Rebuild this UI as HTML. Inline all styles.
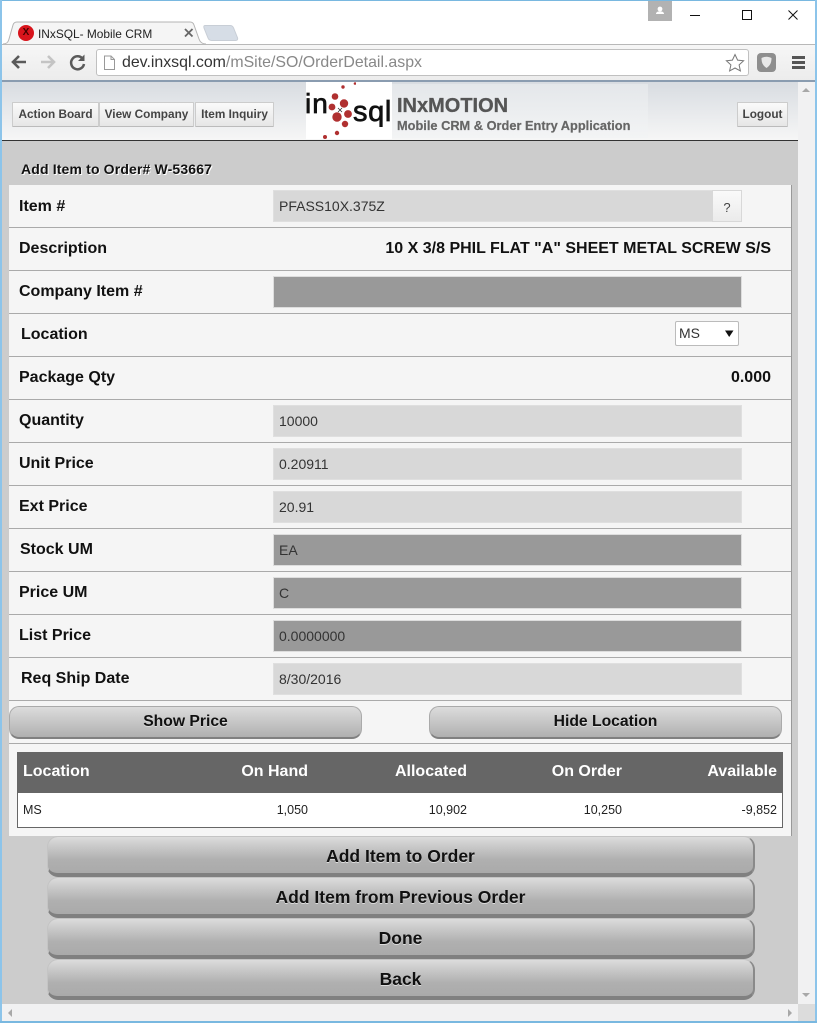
<!DOCTYPE html>
<html><head><meta charset="utf-8"><title>INxSQL- Mobile CRM</title>
<style>
html,body{margin:0;padding:0;width:817px;height:1023px;overflow:hidden;background:#fff;font-family:"Liberation Sans",sans-serif;color:#000}
.a{position:absolute}
.t{position:absolute;white-space:nowrap}
.lb{position:absolute;white-space:nowrap;font-weight:bold;font-size:16px;line-height:20px;color:#111;margin-top:1px}
.ln{position:absolute;left:9px;width:782px;height:1px;background:#aaa}
.in{position:absolute;left:273px;width:469px;height:32px;background:#d8d8d8;border:1px solid #dfdfdf;box-sizing:border-box;font-size:14px;line-height:31px;padding-left:5px;color:#333}
.dk{background:#999;border-color:#ddd}
.hb{position:absolute;top:102px;height:25px;box-sizing:border-box;border:1px solid #ccc;border-bottom-color:#bbb;background:linear-gradient(#fafafa,#e6e6e6);font-size:11.8px;font-weight:bold;line-height:22px;text-align:center;color:#444;border-radius:1px}
.b1{position:absolute;top:706px;height:33px;width:353px;box-sizing:border-box;border-radius:10px;background:linear-gradient(#dcdcdc,#b0b0b0);border:1px solid #aaa;border-bottom:2px solid #808080;font-weight:bold;font-size:15.7px;line-height:30px;text-align:center;color:#111;text-shadow:0 1px 0 #ddd}
.b2{position:absolute;left:47px;width:708px;height:41px;box-sizing:border-box;border-radius:11px;background:linear-gradient(#dcdcdc 0%,#b0b0b0 62%,#aaa 100%);border:1px solid #c4c4c4;border-right:2px solid #8a8a8a;border-bottom:4px solid #808080;font-weight:bold;font-size:17.5px;line-height:39px;text-align:center;color:#111;text-shadow:0 1px 0 #ddd}
.th{position:absolute;top:762px;font-weight:bold;font-size:16px;line-height:20px;color:#fff;white-space:nowrap}
.td{position:absolute;top:802px;font-size:12.5px;line-height:16px;color:#222;white-space:nowrap}
</style></head><body>

<!-- window frame -->
<div class="a" style="left:0;top:0;width:817px;height:1px;background:#79b8e0"></div>
<div class="a" style="left:0;top:0;width:2px;height:1023px;background:#8cc4ea"></div>
<div class="a" style="right:0;top:0;width:2px;height:1023px;background:#8cc4ea"></div>
<div class="a" style="left:0;bottom:0;width:817px;height:2px;background:#79b8e0"></div>

<!-- title controls -->
<div class="a" style="left:648px;top:1px;width:24px;height:20px;background:#b2b2b2"></div>
<svg class="a" style="left:648px;top:1px" width="24" height="20"><circle cx="12" cy="8" r="2.4" fill="#fff"/><path d="M8 13c0-2 2-2.6 4-2.6s4 .6 4 2.6z" fill="#fff"/></svg>
<svg class="a" style="left:690px;top:5px" width="120" height="20" fill="none" stroke="#111" stroke-width="1"><path d="M0 10.5h10"/><rect x="52.5" y="5.500" width="9" height="9"/><path d="M98.500 5.500l9 9M107.500 5.500l-9 9"/></svg>

<!-- tab strip -->
<div class="a" style="left:2px;top:44px;width:813px;height:1px;background:#b8b8b8"></div>
<svg class="a" style="left:2px;top:20px" width="240" height="26">
<path d="M1 24c3 0 5-1 6-5l4-14c.6-2 2-3 4-3h173c2 0 3.400 1 4 3l5 14c1 3 3 5 7 5" fill="#f5f5f5" stroke="#b4b4b4"/>
<path d="M203 5.500h25c2 0 3 1 3.600 2.500l4 10c.4 1.500-.4 2.500-2 2.500h-24c-2 0-3-1-3.600-2.500l-4-10c-.4-1.500-.2-2.500 1-2.500z" fill="#d6dde6" stroke="#c8ced6"/>
</svg>
<div class="a" style="left:18px;top:25px;width:16px;height:16px;border-radius:50%;background:#d8141c"></div>
<div class="t" style="left:18px;top:25px;width:16px;text-align:center;font-size:10px;line-height:16px;font-weight:bold;color:#400">X</div>
<div class="t" style="left:38px;top:27px;font-size:11.9px;line-height:14px;color:#222">INxSQL- Mobile CRM</div>
<svg class="a" style="left:183px;top:27px" width="12" height="12"><path d="M2 2l7.500 7.500M9.500 2L2 9.500" stroke="#666" stroke-width="1.800"/></svg>

<!-- toolbar -->
<div class="a" style="left:2px;top:45px;width:813px;height:36px;background:linear-gradient(#f6f6f6,#ececec)"></div>
<div class="a" style="left:2px;top:80px;width:813px;height:2px;background:#8a9cb0"></div>
<svg class="a" style="left:10px;top:52px" width="80" height="20" fill="none">
<path d="M16 10H3M9 4l-6 6 6 6" stroke="#5a5a5a" stroke-width="2.600"/>
<path d="M31 10h13M38 4l6 6-6 6" stroke="#c4c4c4" stroke-width="2.600"/>
<path d="M72.500 6.500A6.500 6.500 0 1 0 74 12" stroke="#5a5a5a" stroke-width="2.500"/>
<path d="M74.500 2.500v6.500h-6.500z" fill="#5a5a5a"/>
</svg>
<div class="a" style="left:96px;top:49px;width:653px;height:27px;box-sizing:border-box;background:#fff;border:1px solid #c0c0c0;border-radius:3px"></div>
<svg class="a" style="left:103px;top:55px" width="13" height="16"><path d="M1.500 1h6.500l3.500 3.500V14.500h-10zM8 1v3.500h3.500" fill="#fff" stroke="#999"/></svg>
<div class="t" style="left:122px;top:53px;font-size:15.9px;line-height:19px;color:#888"><span style="color:#333">dev.inxsql.com</span>/mSite/SO/OrderDetail.aspx</div>
<svg class="a" style="left:724px;top:52px" width="22" height="22"><path d="M11 2.500l2.600 5.600 6 .7-4.500 4.100 1.300 6L11 16l-5.400 2.900 1.300-6-4.500-4.100 6-.7z" fill="#fff" stroke="#777"/></svg>
<div class="a" style="left:757px;top:53px;width:19px;height:19px;border-radius:4px;background:#8e8e8e"></div>
<svg class="a" style="left:757px;top:53px" width="19" height="19"><path d="M4.500 5c3.300-1.700 6.700-1.700 10 0 0 4.500-1.200 7.500-5 10-3.800-2.500-5-5.500-5-10z" fill="#e8e8e8"/></svg>
<div class="a" style="left:792px;top:56px;width:13px;height:3px;background:#555;box-shadow:0 5px 0 #555,0 10px 0 #555"></div>

<!-- page header -->
<div class="a" style="left:2px;top:82px;width:796px;height:58px;background:linear-gradient(#d8dce1,#f6f6f6)"></div>
<div class="a" style="left:2px;top:140px;width:796px;height:1px;background:#333"></div>
<div class="hb" style="left:12px;width:87px">Action Board</div>
<div class="hb" style="left:99px;width:95px">View Company</div>
<div class="hb" style="left:195px;width:79px">Item Inquiry</div>
<div class="hb" style="left:737px;width:51px">Logout</div>

<!-- logo -->
<div class="a" style="left:392px;top:84px;width:256px;height:54px;background:linear-gradient(#e4e7ea,#f3f4f5)"></div>
<div class="a" style="left:306px;top:82px;width:86px;height:57px;background:#fff"></div>
<div class="t" style="left:305px;top:89px;font-size:28px;line-height:30px;color:#111;-webkit-text-stroke:.7px #111;letter-spacing:1px">in</div>
<div class="t" style="left:353px;top:97px;font-size:29px;line-height:30px;color:#111;-webkit-text-stroke:.7px #111;letter-spacing:.6px;width:39px;overflow:hidden">sql</div>
<svg class="a" style="left:306px;top:82px" width="50" height="57" fill="#b03030">
<circle cx="37" cy="5" r="1.700"/><circle cx="49" cy="1.500" r="1.300"/><circle cx="29" cy="14.500" r="3.300"/><circle cx="38" cy="21.500" r="4.200"/><circle cx="26" cy="25" r="3.400"/><circle cx="42" cy="32" r="3.900"/><circle cx="31" cy="35" r="4.700"/><circle cx="39" cy="42" r="3.200"/><circle cx="31" cy="51" r="2.200"/><circle cx="19" cy="55" r="2"/>
<path d="M32 26l4 4M36 26l-4 4" stroke="#222" stroke-width=".7" fill="none"/></svg>
<div class="t" style="left:397px;top:94px;font-size:20px;line-height:24px;font-weight:bold;color:#555;-webkit-text-stroke:.3px #555">INxMOTION</div>
<div class="t" style="left:397px;top:118px;font-size:12.8px;line-height:16px;font-weight:bold;color:#666;-webkit-text-stroke:.2px #666">Mobile CRM &amp; Order Entry Application</div>

<!-- content bg -->
<div class="a" style="left:2px;top:141px;width:796px;height:863px;background:#ccc"></div>
<div class="t" style="left:21px;top:161px;font-size:14px;line-height:17px;font-weight:bold;color:#111;text-shadow:1px 1px 0 #fff;letter-spacing:.15px">Add Item to Order# W-53667</div>

<!-- panel -->
<div class="a" style="left:9px;top:185px;width:783px;height:651px;box-sizing:border-box;background:#f5f5f5;border-right:1px solid #999"></div>
<div class="ln" style="top:227px"></div><div class="ln" style="top:270px"></div><div class="ln" style="top:313px"></div><div class="ln" style="top:356px"></div><div class="ln" style="top:399px"></div><div class="ln" style="top:442px"></div><div class="ln" style="top:485px"></div><div class="ln" style="top:528px"></div><div class="ln" style="top:571px"></div><div class="ln" style="top:614px"></div><div class="ln" style="top:657px"></div><div class="ln" style="top:700px"></div><div class="ln" style="top:743px"></div>

<div class="lb" style="left:19px;top:196px">Item #</div>
<div class="in" style="top:190px">PFASS10X.375Z</div>
<div class="a" style="left:712px;top:190px;width:30px;height:32px;box-sizing:border-box;background:linear-gradient(#fafafa,#ebebeb);border:1px solid #d8d8d8;font-size:13px;line-height:33px;text-align:center;color:#444">?</div>

<div class="lb" style="left:19px;top:238px">Description</div>
<div class="lb" style="right:46px;top:238px">10 X 3/8 PHIL FLAT "A" SHEET METAL SCREW S/S</div>

<div class="lb" style="left:19px;top:281px">Company Item #</div>
<div class="in dk" style="top:276px"></div>

<div class="lb" style="left:21px;top:324px">Location</div>
<div class="a" style="left:675px;top:321px;width:64px;height:25px;box-sizing:border-box;background:#fff;border:1px solid #bbb;border-radius:2px;font-size:14px;line-height:23px;padding-left:3px;color:#333">MS</div>
<svg class="a" style="left:725px;top:330px" width="9" height="8"><path d="M0 .5h8.500L4.200 7z" fill="#111"/></svg>

<div class="lb" style="left:19px;top:367px">Package Qty</div>
<div class="lb" style="right:46px;top:367px">0.000</div>

<div class="lb" style="left:19px;top:410px">Quantity</div>
<div class="in" style="top:405px">10000</div>
<div class="lb" style="left:19px;top:453px">Unit Price</div>
<div class="in" style="top:448px">0.20911</div>
<div class="lb" style="left:19px;top:496px">Ext Price</div>
<div class="in" style="top:491px">20.91</div>
<div class="lb" style="left:20px;top:539px">Stock UM</div>
<div class="in dk" style="top:534px">EA</div>
<div class="lb" style="left:19px;top:582px">Price UM</div>
<div class="in dk" style="top:577px">C</div>
<div class="lb" style="left:19px;top:625px">List Price</div>
<div class="in dk" style="top:620px">0.0000000</div>
<div class="lb" style="left:21px;top:668px">Req Ship Date</div>
<div class="in" style="top:663px">8/30/2016</div>

<div class="b1" style="left:9px">Show Price</div>
<div class="b1" style="left:429px">Hide Location</div>

<!-- table -->
<div class="a" style="left:17px;top:752px;width:766px;height:76px;box-sizing:border-box;background:#fff;border:1px solid #666"></div>
<div class="a" style="left:17px;top:752px;width:766px;height:41px;background:#666"></div>
<div class="th" style="left:23px">Location</div>
<div class="th" style="right:509px">On Hand</div>
<div class="th" style="right:350px">Allocated</div>
<div class="th" style="right:195px">On Order</div>
<div class="th" style="right:40px">Available</div>
<div class="td" style="left:23px">MS</div>
<div class="td" style="right:509px">1,050</div>
<div class="td" style="right:350px">10,902</div>
<div class="td" style="right:195px">10,250</div>
<div class="td" style="right:40px">-9,852</div>

<!-- main buttons -->
<div class="b2" style="top:836px">Add Item to Order</div>
<div class="b2" style="top:877px">Add Item from Previous Order</div>
<div class="b2" style="top:918px">Done</div>
<div class="b2" style="top:959px">Back</div>

<!-- scrollbars -->
<div class="a" style="left:798px;top:82px;width:17px;height:922px;background:#f1f1f2"></div>
<div class="a" style="left:2px;top:1004px;width:796px;height:17px;background:#f1f1f2"></div>
<div class="a" style="left:798px;top:1004px;width:17px;height:17px;background:#dcdcdc"></div>
<svg class="a" style="left:0;top:0;pointer-events:none" width="817" height="1023" fill="#a8a8a8">
<path d="M802 92l4-4 4 4zM802 993h8l-4 4zM12 1009v8l-4-4zM788 1009v8l4-4z"/></svg>
</body></html>
